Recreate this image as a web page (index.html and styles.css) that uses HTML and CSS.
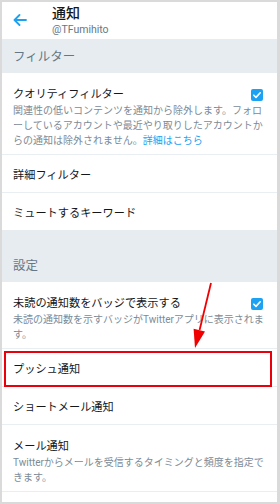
FILE: index.html
```html
<!DOCTYPE html>
<html lang="ja">
<head>
<meta charset="utf-8">
<link rel="stylesheet" href="styles.css">
</head>
<body>
<div class="frame">
  <header class="header">
    <div class="back">
      <svg width="14" height="12" viewBox="0 0 14 12"><path d="M13 6H1.5M6.5 1L1.5 6l5 5" fill="none" stroke="#1da1f2" stroke-width="1.8" stroke-linecap="round" stroke-linejoin="round"/></svg>
    </div>
    <div class="htext">
      <div class="htitle">通知</div>
      <div class="hsub">@TFumihito</div>
    </div>
  </header>

  <div class="section">フィルター</div>
  <div class="row">
    <div class="rtop">
      <div class="rtitle">クオリティフィルター</div>
      <span class="check"><svg width="12" height="12" viewBox="0 0 12 12"><path d="M2.8 6.2l2.2 2.2 4.2-4.6" fill="none" stroke="#fff" stroke-width="1.6" stroke-linecap="round" stroke-linejoin="round"/></svg></span>
    </div>
    <div class="rdesc">関連性の低いコンテンツを通知から除外します。フォローしているアカウントや最近やり取りしたアカウントからの通知は除外されません。<span class="link">詳細はこちら</span></div>
  </div>
  <div class="row simple"><div class="rtitle">詳細フィルター</div></div>
  <div class="row simple last"><div class="rtitle">ミュートするキーワード</div></div>

  <div class="spacer"></div>
  <div class="section">設定</div>
  <div class="row">
    <div class="rtop">
      <div class="rtitle">未読の通知数をバッジで表示する</div>
      <span class="check"><svg width="12" height="12" viewBox="0 0 12 12"><path d="M2.8 6.2l2.2 2.2 4.2-4.6" fill="none" stroke="#fff" stroke-width="1.6" stroke-linecap="round" stroke-linejoin="round"/></svg></span>
    </div>
    <div class="rdesc">未読の通知数を示すバッジがTwitterアプリに表示されます。</div>
  </div>
  <div class="row simple"><div class="rtitle">プッシュ通知</div></div>
  <div class="row simple"><div class="rtitle">ショートメール通知</div></div>
  <div class="row">
    <div class="rtop"><div class="rtitle">メール通知</div></div>
    <div class="rdesc">Twitterからメールを受信するタイミングと頻度を指定できます。</div>
  </div>

  <div class="highlight"></div>
  <svg class="arrow" width="280" height="504" viewBox="0 0 280 504">
    <line x1="211" y1="283" x2="199.6" y2="330" stroke="#f00000" stroke-width="1.8"/>
    <polygon points="195,348 193.6,328.8 205,331.6" fill="#f00000"/>
  </svg>
</div>
</body>
</html>
```

FILE: styles.css
```css
* { box-sizing: border-box; }
html, body { margin: 0; padding: 0; }
body {
  background: #dadada;
  width: 280px;
  height: 504px;
  overflow: hidden;
  font-family: Roboto, "Noto Sans CJK JP", sans-serif;
  color: #14171a;
}
.frame {
  margin: 2px 3px 2px 2px;
  width: 275px;
  height: 500px;
  background: #fff;
  overflow: hidden;
}
.header {
  height: 37px;
  display: flex;
  align-items: flex-start;
  padding-top: 2px;
}
.back {
  width: 50px;
  padding: 10px 0 0 11px;
  line-height: 0;
}
.htitle {
  font-size: 14px;
  line-height: 18px;
  font-weight: 500;
}
.hsub {
  font-size: 10.5px;
  line-height: 16px;
  color: #657786;
}
.section {
  background: #e6ecf0;
  height: 34px;
  line-height: 32px;
  padding: 2px 0 0 11px;
  font-size: 12.5px;
  color: #657786;
}
.spacer {
  height: 18px;
  background: #e6ecf0;
}
.row {
  padding: 13px 12px 6px 11px;
  border-bottom: 1px solid #e9eef2;
}
.row.simple {
  padding-top: 12px;
  padding-bottom: 8px;
}
.row.last { border-bottom: none; }
.rtop {
  display: flex;
  align-items: center;
  justify-content: space-between;
}
.rtitle {
  font-size: 11.2px;
  line-height: 17px;
}
.check {
  width: 12px;
  height: 12px;
  margin-right: 2px;
  border-radius: 2px;
  background: #1da1f2;
  line-height: 0;
}
.rdesc {
  font-size: 10px;
  line-height: 15px;
  color: #7b8b98;
}
.link { color: #1da1f2; }
.highlight {
  position: absolute;
  left: 4px;
  top: 351px;
  width: 268px;
  height: 36px;
  border: 2px solid #e8000b;
}
.arrow {
  position: absolute;
  left: 0;
  top: 0;
}
```
